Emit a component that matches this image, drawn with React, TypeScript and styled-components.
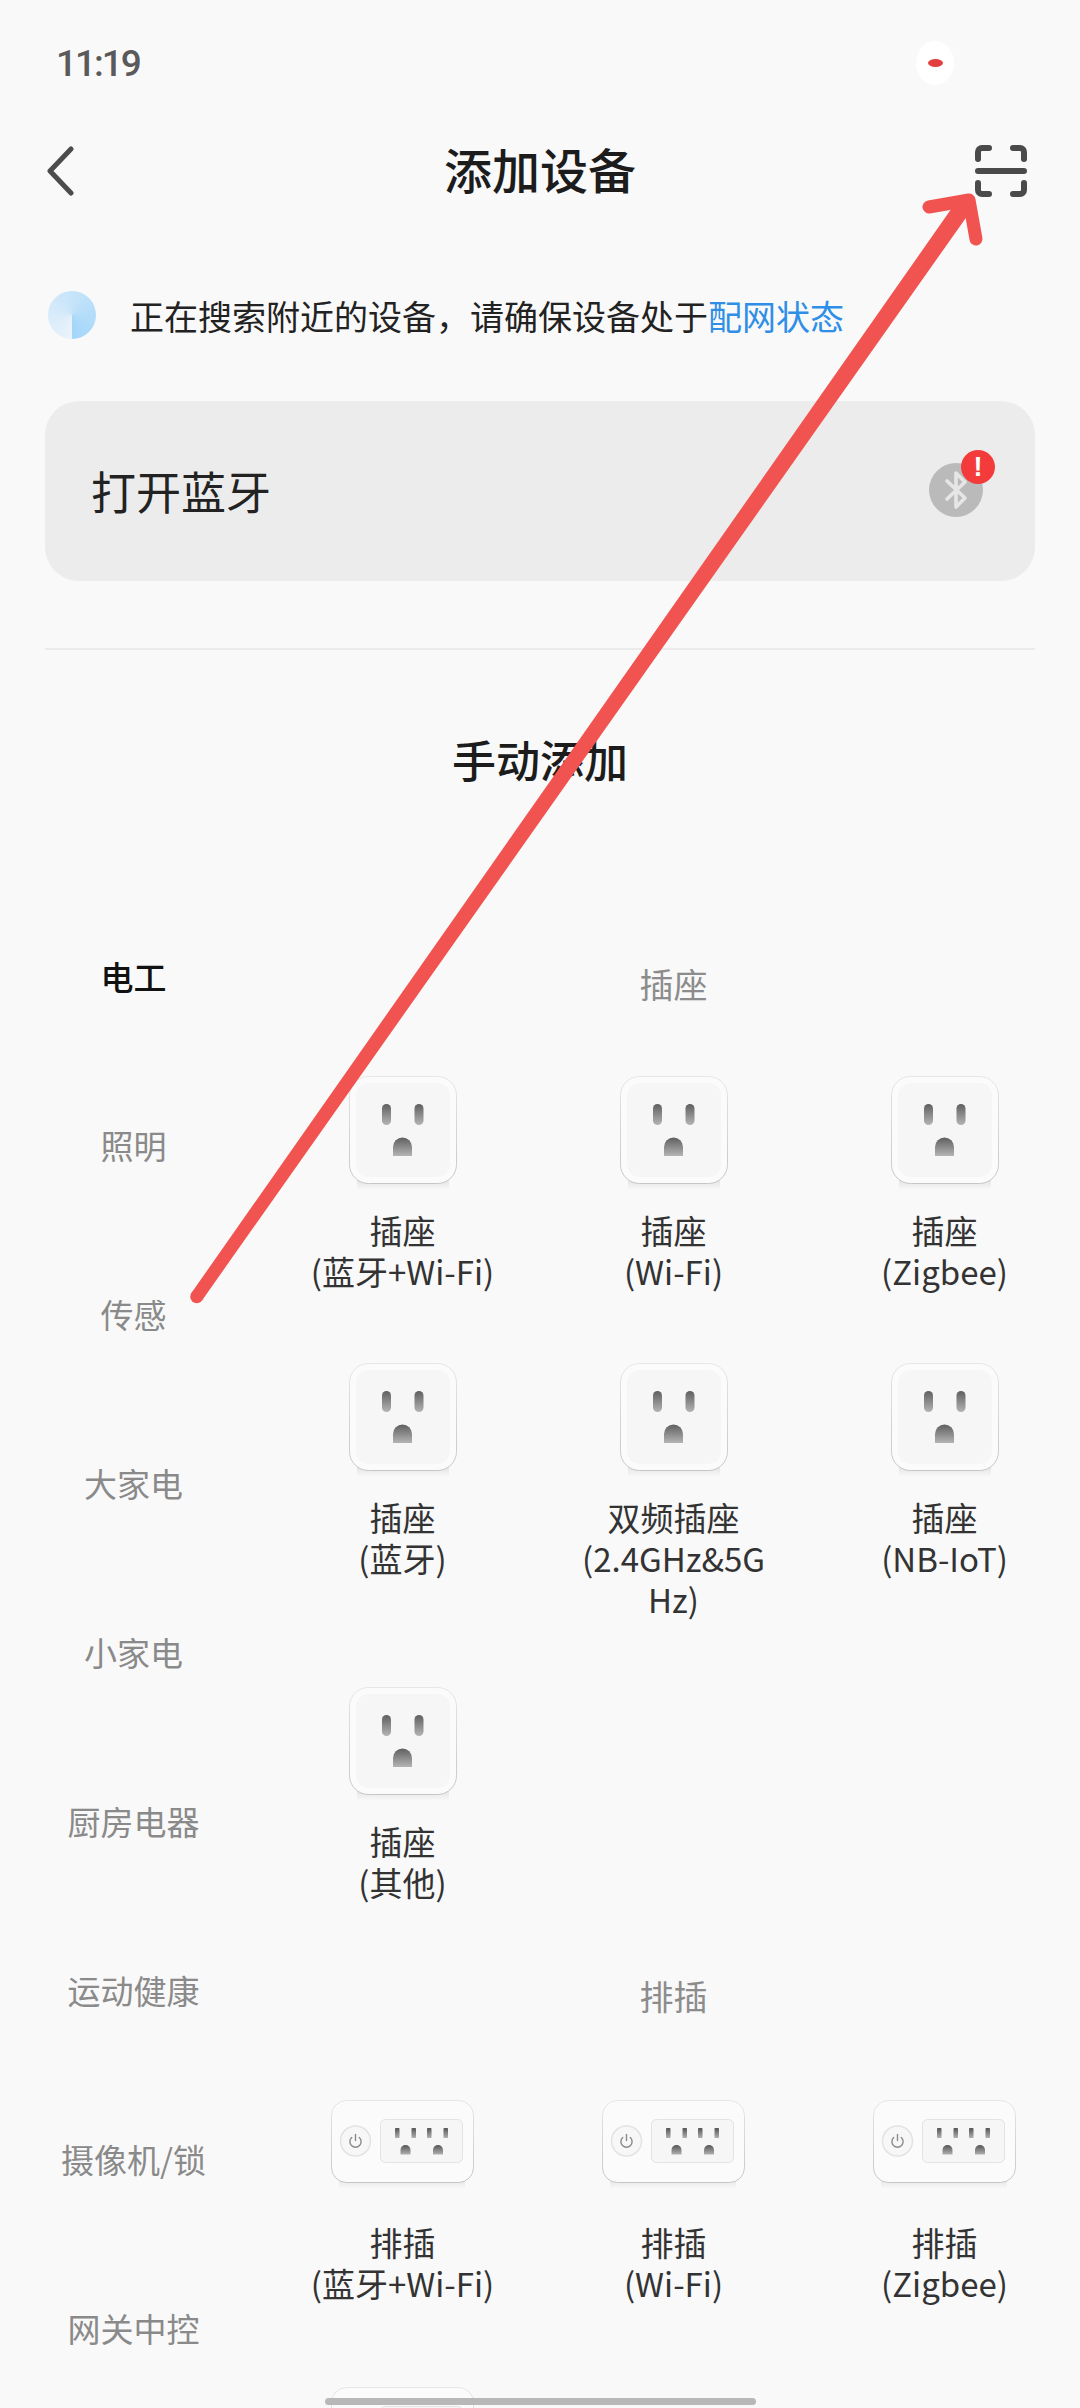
import styled, { createGlobalStyle } from "styled-components";

const GlobalStyle = createGlobalStyle`
    html, body {
        margin: 0;
        padding: 0;
        background: #f9f9f9;
    }
    * {
        box-sizing: border-box;
    }
`;

const Page = styled.div`
    position: relative;
    width: 1080px;
    height: 2408px;
    overflow: hidden;
    background: #f9f9f9;
    font-family: "Noto Sans CJK SC", "Noto Sans", sans-serif;
    color: #1c1c1c;
`;

const StatusBar = styled.div`
    height: 126px;
    padding: 0 126px 0 56px;
    display: flex;
    align-items: center;
    justify-content: space-between;
`;

const Time = styled.span`
    font-family: Roboto, sans-serif;
    font-size: 37px;
    font-weight: 500;
    letter-spacing: -2px;
    color: #5a5a5a;
`;

const RecordDot = styled.span`
    width: 38px;
    height: 44px;
    border-radius: 50%;
    background: #ffffff;
    display: flex;
    align-items: center;
    justify-content: center;
    &::after {
        content: "";
        width: 15px;
        height: 8px;
        border-radius: 50%;
        background: #e2403f;
    }
`;

const Header = styled.header`
    height: 90px;
    padding: 0 53px;
    display: grid;
    grid-template-columns: 1fr auto 1fr;
    align-items: center;
    & > svg:first-child {
        margin-left: -9px;
    }
    & > svg:last-child {
        justify-self: end;
    }
`;

const Title = styled.h1`
    margin: 0;
    padding-bottom: 6px;
    font-size: 48px;
    font-weight: 500;
    color: #1c1c1c;
`;

const SearchRow = styled.div`
    margin-top: 62px;
    height: 74px;
    padding-left: 48px;
    display: flex;
    align-items: center;
    gap: 34px;
    font-size: 34px;
    color: #222222;
`;

const Spinner = styled.span`
    width: 48px;
    height: 48px;
    border-radius: 50%;
    background: conic-gradient(#c6e4f9 0deg, #a3d6fa 180deg, #e9f3fb 180deg, #c6e4f9 360deg);
`;

const Link = styled.span`
    color: #2f8fe6;
`;

const BluetoothCard = styled.div`
    margin: 49px 45px 0;
    height: 180px;
    padding: 0 52px 2px 46px;
    border-radius: 34px;
    background: #ececec;
    display: flex;
    align-items: center;
    justify-content: space-between;
    font-size: 45px;
    color: #222222;
`;

const BluetoothIcon = styled.span`
    position: relative;
    width: 54px;
    height: 54px;
    border-radius: 50%;
    background: #bababa;
    display: flex;
    align-items: center;
    justify-content: center;
`;

const AlertBadge = styled.span`
    position: absolute;
    top: -13px;
    right: -12px;
    width: 34px;
    height: 34px;
    border-radius: 50%;
    background: #f33b3b;
    color: #ffffff;
    font-family: "Liberation Sans", sans-serif;
    font-size: 27px;
    font-weight: 700;
    line-height: 34px;
    text-align: center;
`;

const Divider = styled.hr`
    margin: 67px 45px 0;
    border: 0;
    border-top: 2px solid #ebebeb;
`;

const ManualTitle = styled.h2`
    margin: 74px 0 0;
    height: 70px;
    font-size: 44px;
    font-weight: 500;
    line-height: 70px;
    text-align: center;
    color: #1c1c1c;
`;

const Body = styled.div`
    margin-top: 97px;
    display: flex;
`;

const Sidebar = styled.nav`
    width: 267px;
    flex-shrink: 0;
    display: flex;
    flex-direction: column;
`;

const SideItem = styled.div<{ $active?: boolean }>`
    height: 169px;
    display: flex;
    align-items: center;
    justify-content: center;
    font-size: 33px;
    font-weight: ${(props) => (props.$active ? 500 : 400)};
    color: ${(props) => (props.$active ? "#111111" : "#8a8a8a")};
`;

const Content = styled.main`
    flex: 1;
    padding-top: 63px;
`;

const SectionTitle = styled.h3`
    margin: 0 0 62px;
    height: 60px;
    font-size: 34px;
    font-weight: 400;
    line-height: 60px;
    text-align: center;
    color: #8c8c8c;
`;

const Grid = styled.div`
    display: grid;
    grid-template-columns: repeat(3, 271px);
    row-gap: 67px;
    margin-bottom: 59px;
`;

const Device = styled.div`
    display: flex;
    flex-direction: column;
    align-items: center;
`;

const DeviceIcon = styled.div`
    height: 108px;
    display: flex;
    align-items: center;
    justify-content: center;
    & > svg {
        overflow: visible;
    }
`;

const DeviceLabel = styled.div`
    margin-top: 26px;
    min-height: 86px;
    font-size: 33px;
    line-height: 41px;
    text-align: center;
    white-space: pre-line;
    color: #333333;
`;

const ArrowLayer = styled.svg`
    position: absolute;
    top: 0;
    left: 0;
    pointer-events: none;
`;

const NavPill = styled.div`
    position: absolute;
    left: 325px;
    bottom: 3px;
    width: 431px;
    height: 7px;
    border-radius: 4px;
    background: #b8b8b8;
`;

const categories = ["电工", "照明", "传感", "大家电", "小家电", "厨房电器", "运动健康", "摄像机/锁", "网关中控"];

const sockets = [
    "插座\n(蓝牙+Wi-Fi)",
    "插座\n(Wi-Fi)",
    "插座\n(Zigbee)",
    "插座\n(蓝牙)",
    "双频插座\n(2.4GHz&5G\nHz)",
    "插座\n(NB-IoT)",
    "插座\n(其他)",
];

// the fourth strip only peeks in above the bottom edge, its label is off screen
const strips = ["排插\n(蓝牙+Wi-Fi)", "排插\n(Wi-Fi)", "排插\n(Zigbee)", ""];

function SocketIcon(): JSX.Element {
    return (
        <svg width="108" height="108" viewBox="0 0 108 108">
            <defs>
                <linearGradient id="hole" x1="0" y1="0" x2="0" y2="1">
                    <stop offset="0" stopColor="#5f5f5f" />
                    <stop offset="1" stopColor="#b4b4b4" />
                </linearGradient>
                <linearGradient id="shade" x1="0" y1="0" x2="0" y2="1">
                    <stop offset="0" stopColor="#e4e4e4" />
                    <stop offset="1" stopColor="#f9f9f9" />
                </linearGradient>
                <linearGradient id="edge" x1="0" y1="0" x2="0" y2="1">
                    <stop offset="0" stopColor="#e6e6e6" />
                    <stop offset="1" stopColor="#c6c6c6" />
                </linearGradient>
            </defs>
            <rect x="8" y="104" width="92" height="10" fill="url(#shade)" />
            <rect x="0.5" y="0.5" width="107" height="107" rx="19" fill="#fbfbfb" stroke="url(#edge)" />
            <rect x="7" y="7" width="94" height="94" rx="13" fill="#f6f6f7" />
            <rect x="33" y="28" width="9" height="21" rx="4.5" fill="url(#hole)" />
            <rect x="65.5" y="28" width="9" height="21" rx="4.5" fill="url(#hole)" />
            <path d="M44 80V71a9.5 9.5 0 0 1 19 0v9z" fill="url(#hole)" />
        </svg>
    );
}

function StripIcon(): JSX.Element {
    return (
        <svg width="144" height="84" viewBox="0 0 144 84">
            <defs>
                <linearGradient id="stripHole" x1="0" y1="0" x2="0" y2="1">
                    <stop offset="0" stopColor="#555555" />
                    <stop offset="1" stopColor="#b0b0b0" />
                </linearGradient>
                <linearGradient id="stripShade" x1="0" y1="0" x2="0" y2="1">
                    <stop offset="0" stopColor="#e4e4e4" />
                    <stop offset="1" stopColor="#f9f9f9" />
                </linearGradient>
                <linearGradient id="stripEdge" x1="0" y1="0" x2="0" y2="1">
                    <stop offset="0" stopColor="#e6e6e6" />
                    <stop offset="1" stopColor="#c6c6c6" />
                </linearGradient>
            </defs>
            <rect x="8" y="79" width="126" height="10" fill="url(#stripShade)" />
            <rect x="0.5" y="0.5" width="142" height="82" rx="15" fill="#fbfbfb" stroke="url(#stripEdge)" />
            <circle cx="24.5" cy="41" r="15" fill="#f7f7f7" stroke="#e3e3e3" strokeWidth="1.5" />
            <path d="M20.7 37.5a5.6 5.6 0 1 0 7.6 0M24.5 34.5v6" fill="none" stroke="#8b8b8b" strokeWidth="1.4" strokeLinecap="round" />
            <rect x="49.5" y="19.5" width="82" height="43" rx="5" fill="#f6f6f6" stroke="#e3e3e3" />
            {[64, 80.5, 96, 112.5].map((x) => (
                <rect key={x} x={x} y="28" width="4.5" height="10" rx="0.8" fill="url(#stripHole)" />
            ))}
            {[69.5, 102].map((x) => (
                <path key={x} d={`M${x} 54.5v-4.5a5 5 0 0 1 10 0v4.5z`} fill="url(#stripHole)" />
            ))}
        </svg>
    );
}

function App(): JSX.Element {
    return (
        <Page>
            <GlobalStyle />
            <StatusBar>
                <Time>11:19</Time>
                <RecordDot />
            </StatusBar>
            <Header>
                <svg width="32" height="50" viewBox="0 0 32 50">
                    <path d="M27 3 6 25l21 22" fill="none" stroke="#4c4c4c" strokeWidth="5" strokeLinecap="round" strokeLinejoin="round" />
                </svg>
                <Title>添加设备</Title>
                <svg width="52" height="52" viewBox="0 0 52 52">
                    <path
                        d="M3 14V7a4 4 0 0 1 4-4h7M38 3h7a4 4 0 0 1 4 4v7M3 38v7a4 4 0 0 0 4 4h7M38 49h7a4 4 0 0 0 4-4v-7M3 26h46"
                        fill="none"
                        stroke="#4a4a4a"
                        strokeWidth="6"
                        strokeLinecap="round"
                    />
                </svg>
            </Header>
            <SearchRow>
                <Spinner />
                <span>
                    正在搜索附近的设备，请确保设备处于<Link>配网状态</Link>
                </span>
            </SearchRow>
            <BluetoothCard>
                <span>打开蓝牙</span>
                <BluetoothIcon>
                    <svg width="34" height="42" viewBox="0 0 34 42">
                        <path d="M8 12l18 17-9 9V4l9 9L8 30" fill="none" stroke="#e6e6e6" strokeWidth="3.6" strokeLinejoin="round" strokeLinecap="round" />
                    </svg>
                    <AlertBadge>!</AlertBadge>
                </BluetoothIcon>
            </BluetoothCard>
            <Divider />
            <ManualTitle>手动添加</ManualTitle>
            <Body>
                <Sidebar>
                    {categories.map((name, index) => (
                        <SideItem key={name} $active={index === 0}>
                            {name}
                        </SideItem>
                    ))}
                </Sidebar>
                <Content>
                    <SectionTitle>插座</SectionTitle>
                    <Grid>
                        {sockets.map((label) => (
                            <Device key={label}>
                                <DeviceIcon>
                                    <SocketIcon />
                                </DeviceIcon>
                                <DeviceLabel>{label}</DeviceLabel>
                            </Device>
                        ))}
                    </Grid>
                    <SectionTitle>排插</SectionTitle>
                    <Grid>
                        {strips.map((label) => (
                            <Device key={label}>
                                <DeviceIcon>
                                    <StripIcon />
                                </DeviceIcon>
                                <DeviceLabel>{label}</DeviceLabel>
                            </Device>
                        ))}
                    </Grid>
                </Content>
            </Body>
            <ArrowLayer width="1080" height="2408" viewBox="0 0 1080 2408">
                <path d="M202 1300.4 191.4 1293 961 195.1 975 204.9z" fill="#f05350" />
                <circle cx="196.7" cy="1296.7" r="6.5" fill="#f05350" />
                <path d="M929 207 969 200 976 239" fill="none" stroke="#f05350" strokeWidth="13" strokeLinecap="round" strokeLinejoin="round" />
            </ArrowLayer>
            <NavPill />
        </Page>
    );
}

export default App;
